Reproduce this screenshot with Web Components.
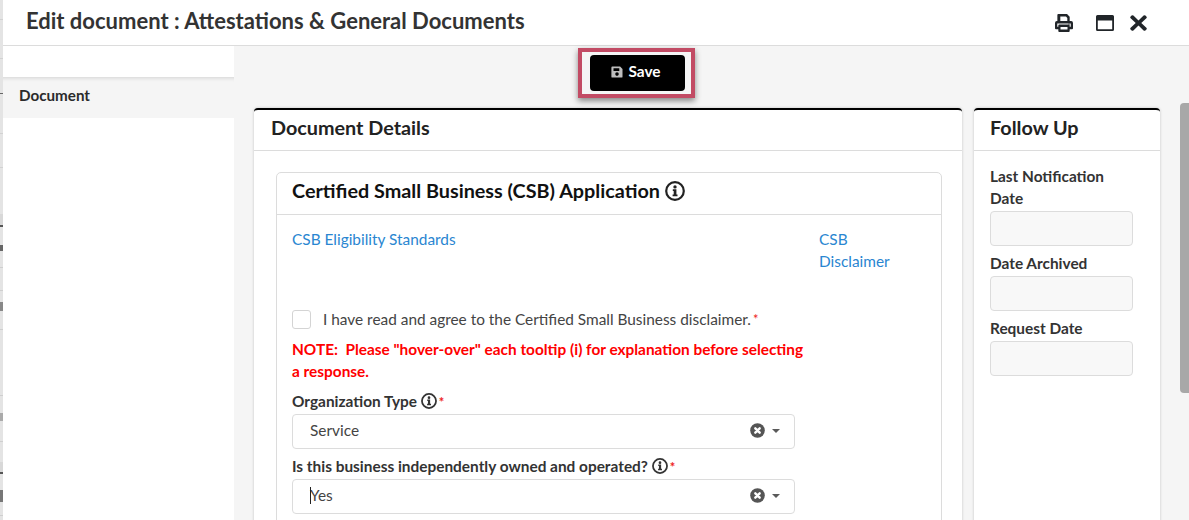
<!DOCTYPE html>
<html>
<head>
<meta charset="utf-8">
<title>Edit document</title>
<style>
  html, body { margin: 0; height: 100%; overflow: hidden; background: #fff; }
  body { font-family: Lato, "Open Sans", sans-serif; color: #333; }
</style>
</head>
<body>
<edit-modal heading="Edit document : Attestations &amp; General Documents">
  <side-nav slot="nav">Document</side-nav>
  <save-bar slot="actions"></save-bar>
  <panel-card slot="main" heading="Document Details" style="width:708px">
    <csb-form></csb-form>
  </panel-card>
  <panel-card slot="side" heading="Follow Up" style="width:186px">
    <follow-up></follow-up>
  </panel-card>
</edit-modal>

<script>
// shared icons, font awesome style
const INFO_ICON = `<svg viewBox="0 0 20 20" width="100%" height="100%"><circle cx="10" cy="10" r="8.8" fill="none" stroke="currentColor" stroke-width="2.2"/><path fill="currentColor" d="M7.800 8.200h3.600v5.200h1.100v1.900H7.600v-1.900h1.100V10H7.800zM10 4.200a1.700 1.700 0 1 1 0 3.400 1.700 1.700 0 0 1 0-3.400z"/></svg>`;

class EditModal extends HTMLElement {
  constructor() {
    super();
    this.attachShadow({ mode: 'open' });
    this.shadowRoot.innerHTML = `
      <style>
        :host { display: flex; width: 1189px; height: 520px; overflow: hidden; }
        .backdrop { flex: none; width: 3px; background: #e4e4e4; }
        .backdrop svg { display: block; }
        .modal { flex: 1; min-width: 0; display: flex; flex-direction: column; background: #fff; }
        header { flex: none; height: 46px; box-sizing: border-box; display: flex; align-items: center; padding: 0 42px 0 23px; border-bottom: 1px solid #dcdcdc; }
        h1 { flex: 1; margin: 0 0 3px; font-size: 22px; line-height: 28px; font-weight: 700; color: #333; }
        .tools { display: flex; align-items: center; color: #212529; }
        .tools svg { display: block; }
        .body { flex: 1; min-height: 0; display: flex; }
        .nav { flex: none; width: 231px; background: #fff; }
        .content { flex: 1; min-width: 0; background: #f5f5f5; display: flex; position: relative; }
        .inner { flex: 1; min-width: 0; padding-left: 20px; }
        .cards { display: flex; align-items: flex-start; gap: 12px; margin-top: 11px; }
        .scroll { position: absolute; top: 57px; right: 0; width: 9px; height: 290px; background: #a8a8a8; border-radius: 4px 0 0 4px; }
      </style>
      <div class="backdrop">
        <svg width="3" height="520">
          <rect y="19" width="3" height="1" fill="#d2d2d2"/><rect y="58" width="3" height="1" fill="#d2d2d2"/>
          <rect y="93" width="3" height="1" fill="#666"/><rect y="133" width="3" height="1" fill="#d2d2d2"/>
          <rect y="167" width="3" height="1" fill="#d2d2d2"/><rect y="214" width="3" height="12" fill="#d8d8d8"/>
          <rect y="225" width="3" height="2" fill="#555"/><rect y="245" width="3" height="6" fill="#666"/>
          <rect y="267" width="3" height="1" fill="#cfcfcf"/><rect y="290" width="3" height="1" fill="#cfcfcf"/>
          <rect y="302" width="3" height="9" fill="#888"/><rect y="329" width="3" height="1" fill="#cfcfcf"/>
          <rect y="395" width="3" height="1" fill="#cfcfcf"/><rect y="413" width="3" height="8" fill="#aaa"/>
          <rect y="441" width="3" height="1" fill="#cfcfcf"/><rect y="462" width="3" height="12" fill="#d8d8d8"/>
          <rect y="472" width="3" height="2" fill="#555"/><rect y="490" width="3" height="12" fill="#777"/>
          <rect y="515" width="3" height="1" fill="#cfcfcf"/>
        </svg>
      </div>
      <div class="modal">
        <header>
          <h1>${this.getAttribute('heading')}</h1>
          <div class="tools">
            <svg width="18" height="18" viewBox="0 0 19 18" preserveAspectRatio="none" style="margin-right:23px"><path fill="currentColor" fill-rule="evenodd" d="M3.500 0h9.200l2.800 2.800V7H17a2 2 0 0 1 2 2v5.200a1 1 0 0 1-1 1h-2.500V17a1 1 0 0 1-1 1h-10a1 1 0 0 1-1-1v-1.800H1a1 1 0 0 1-1-1V9a2 2 0 0 1 2-2h.5V1a1 1 0 0 1 1-1zM5.600 2.600V7H13V4l-1.400-1.400zM5.800 13v2.600h7.400V13zM2.400 9.400v3.400h1.100v-1.400a1 1 0 0 1 1-1h10a1 1 0 0 1 1 1v1.400h1.100V9.400zM14.700 9.100a.9.900 0 1 0 0 1.800.9.900 0 0 0 0-1.800z"/></svg>
            <svg width="18" height="16" viewBox="0 0 18 16" style="margin-right:16px"><path fill="currentColor" fill-rule="evenodd" d="M1.500 0h15A1.500 1.500 0 0 1 18 1.500v13a1.500 1.500 0 0 1-1.500 1.500h-15A1.500 1.500 0 0 1 0 14.500v-13A1.500 1.500 0 0 1 1.500 0zM1.800 5.500v8.700h14.400V5.500z"/></svg>
            <svg width="17" height="16" viewBox="0 0 16 16" preserveAspectRatio="none"><path fill="currentColor" d="M3.200.6 8 5.400 12.800.6a1.200 1.200 0 0 1 1.700 0l.9.9a1.200 1.200 0 0 1 0 1.700L10.600 8l4.800 4.800a1.200 1.200 0 0 1 0 1.700l-.9.9a1.200 1.200 0 0 1-1.700 0L8 10.600l-4.800 4.800a1.200 1.200 0 0 1-1.700 0l-.9-.9a1.200 1.200 0 0 1 0-1.700L5.400 8 .6 3.200a1.200 1.200 0 0 1 0-1.700l.9-.9a1.200 1.200 0 0 1 1.700 0z"/></svg>
          </div>
        </header>
        <div class="body">
          <div class="nav"><slot name="nav"></slot></div>
          <div class="content">
            <div class="inner">
              <slot name="actions"></slot>
              <div class="cards"><slot name="main"></slot><slot name="side"></slot></div>
            </div>
            <div class="scroll"></div>
          </div>
        </div>
      </div>`;
  }
}
customElements.define('edit-modal', EditModal);

class SideNav extends HTMLElement {
  constructor() {
    super();
    this.attachShadow({ mode: 'open' });
    this.shadowRoot.innerHTML = `
      <style>
        :host { display: block; padding-top: 31px; }
        .item { position: relative; height: 41px; box-sizing: border-box; padding: 9px 0 0 16px; background: #f5f5f5; box-shadow: inset 0 5px 4px -4px rgba(0,0,0,.14); font-size: 15.200px; line-height: 18px; font-weight: 700; color: #2b2b2b; }
      </style>
      <div class="item"><slot></slot></div>`;
  }
}
customElements.define('side-nav', SideNav);

class SaveBar extends HTMLElement {
  constructor() {
    super();
    this.attachShadow({ mode: 'open' });
    this.shadowRoot.innerHTML = `
      <style>
        :host { display: flex; justify-content: center; width: 765px; padding-top: 2px; height: 51px; box-sizing: border-box; }
        .ring { box-sizing: border-box; width: 117px; height: 50px; border: 4px solid #c24b64; box-shadow: 0 3px 6px rgba(0,0,0,.45); display: flex; align-items: center; justify-content: center; padding-left: 1px; background: #f5f5f5; }
        button { width: 95px; height: 36px; border: 0; border-radius: 4px; background: #000; color: #fff; font: 700 15.400px/18px Lato, sans-serif; display: flex; align-items: center; justify-content: center; gap: 5px; padding: 0 2px 5px 0; }
        svg { display: block; margin-top: 3px; }
      </style>
      <div class="ring">
        <button>
          <svg width="12" height="12" viewBox="0 0 12 12"><path fill="#bdbdbd" fill-rule="evenodd" d="M1.300.5h7.800L11.500 2.900v7.800a.9.900 0 0 1-.9.900H1.300a.9.900 0 0 1-.9-.9V1.400a.9.900 0 0 1 .9-.9zM2.500 2.300v2.700h5.800V2.300zM6 6.300a1.800 1.800 0 1 0 0 3.600 1.800 1.800 0 0 0 0-3.600z"/></svg>
          Save
        </button>
      </div>`;
  }
}
customElements.define('save-bar', SaveBar);

class PanelCard extends HTMLElement {
  constructor() {
    super();
    this.attachShadow({ mode: 'open' });
    this.shadowRoot.innerHTML = `
      <style>
        :host { display: block; flex: none; box-sizing: border-box; height: 560px; background: #fff; border-top: 2px solid #000; border-radius: 4px 4px 0 0; box-shadow: 0 0 3px rgba(0,0,0,.2); }
        .head { height: 41px; box-sizing: border-box; padding: 5px 0 0 17px; border-bottom: 1px solid #dcdcdc; font-size: 19.800px; line-height: 25px; font-weight: 700; color: #222; }
        :host([heading="Follow Up"]) .head { padding-left: 16px; }
      </style>
      <div class="head">${this.getAttribute('heading')}</div>
      <slot></slot>`;
  }
}
customElements.define('panel-card', PanelCard);

class InfoTip extends HTMLElement {
  constructor() {
    super();
    this.attachShadow({ mode: 'open' });
    this.shadowRoot.innerHTML = `
      <style>
        :host { display: inline-block; width: var(--size, 15px); height: var(--size, 15px); vertical-align: -2px; color: #222; }
        svg { display: block; }
      </style>${INFO_ICON}`;
  }
}
customElements.define('info-tip', InfoTip);

class FieldSelect extends HTMLElement {
  constructor() {
    super();
    this.attachShadow({ mode: 'open' });
    this.shadowRoot.innerHTML = `
      <style>
        :host { display: flex; align-items: center; box-sizing: border-box; height: 35px; width: 503px; padding: 0 14px 2px 17px; background: #fff; border: 1px solid #dcdcdc; border-radius: 4px; font-size: 15.400px; color: #444; }
        .val { flex: 1; position: relative; margin-bottom: 2px; }
        .caret { position: absolute; left: 0; top: 1px; width: 1px; height: 17px; background: #222; display: none; }
        :host([focused]) .caret { display: block; }
        svg { display: block; }
      </style>
      <div class="val"><span class="caret"></span><slot></slot></div>
      <svg width="15" height="15" viewBox="0 0 15 15" style="margin-right:7px"><circle cx="7.500" cy="7.500" r="7.300" fill="#555"/><path stroke="#fff" stroke-width="2.400" stroke-linecap="round" d="M5.300 5.300l4.400 4.400M9.700 5.300l-4.400 4.400"/></svg>
      <svg width="8" height="4" viewBox="0 0 8 4"><path fill="#5a5a5a" d="M0 0h8L4 4z"/></svg>`;
  }
}
customElements.define('field-select', FieldSelect);

class CsbForm extends HTMLElement {
  constructor() {
    super();
    this.attachShadow({ mode: 'open' });
    this.shadowRoot.innerHTML = `
      <style>
        :host { display: block; padding: 21px 20px 0 22px; }
        .card { border: 1px solid #dcdcdc; border-radius: 5px; height: 500px; }
        .head { height: 42px; box-sizing: border-box; padding: 5px 0 0 15px; border-bottom: 1px solid #dcdcdc; font-size: 19.800px; line-height: 25px; font-weight: 700; color: #111; }
        .head info-tip { --size: 20px; vertical-align: -3px; }
        .body { padding: 13px 15px 0; width: 520px; position: relative; height: 400px; }
        .links { height: 80px; font-size: 15.400px; line-height: 22px; }
        a { color: #2a86d1; text-decoration: none; }
        .disc { display: block; width: 72px; position: absolute; left: 542px; top: 13px; font-size: 15.400px; line-height: 22px; }
        .agree { display: flex; align-items: center; height: 22px; margin-bottom: 8px; font-size: 15.400px; color: #444; white-space: nowrap; }
        .box { flex: none; width: 19px; height: 19px; box-sizing: border-box; border: 1px solid #d4d4d4; border-radius: 3px; margin-right: 12px; background: #fff; }
        .req { color: #e22; margin-left: 2px; font-size: 13px; }
        .note { color: #f00; font-weight: 700; font-size: 15.400px; line-height: 22px; margin-bottom: 8px; white-space: pre-wrap; }
        label { display: block; height: 22px; font-weight: 700; font-size: 15.400px; line-height: 22px; margin-bottom: 2px; color: #333; white-space: nowrap; }
        label info-tip { --size: 16px; color: #333; margin-left: 0; vertical-align: -2px; }
        field-select { margin-bottom: 6px; }
      </style>
      <div class="card">
        <div class="head">Certified Small Business (CSB) Application <info-tip></info-tip></div>
        <div class="body">
          <div class="links"><a href="#">CSB Eligibility Standards</a></div>
          <a class="disc" href="#">CSB Disclaimer</a>
          <div class="agree"><span class="box"></span>I have read and agree to the Certified Small Business disclaimer.<span class="req">*</span></div>
          <div class="note">NOTE:  Please "hover-over" each tooltip (i) for explanation before selecting a response.</div>
          <label>Organization Type <info-tip></info-tip><span class="req">*</span></label>
          <field-select>Service</field-select>
          <label>Is this business independently owned and operated? <info-tip></info-tip><span class="req">*</span></label>
          <field-select focused>Yes</field-select>
        </div>
      </div>`;
  }
}
customElements.define('csb-form', CsbForm);

class FollowUp extends HTMLElement {
  constructor() {
    super();
    this.attachShadow({ mode: 'open' });
    this.shadowRoot.innerHTML = `
      <style>
        :host { display: block; padding: 14px 27px 0 16px; }
        label { display: block; font-weight: 700; font-size: 15.400px; line-height: 22px; margin-bottom: 2px; color: #333; }
        .input { height: 35px; box-sizing: border-box; background: #f8f8f8; border: 1px solid #dcdcdc; border-radius: 4px; margin-bottom: 6px; }
      </style>
      <label>Last Notification Date</label><div class="input"></div>
      <label>Date Archived</label><div class="input"></div>
      <label>Request Date</label><div class="input"></div>`;
  }
}
customElements.define('follow-up', FollowUp);
</script>
</body>
</html>
